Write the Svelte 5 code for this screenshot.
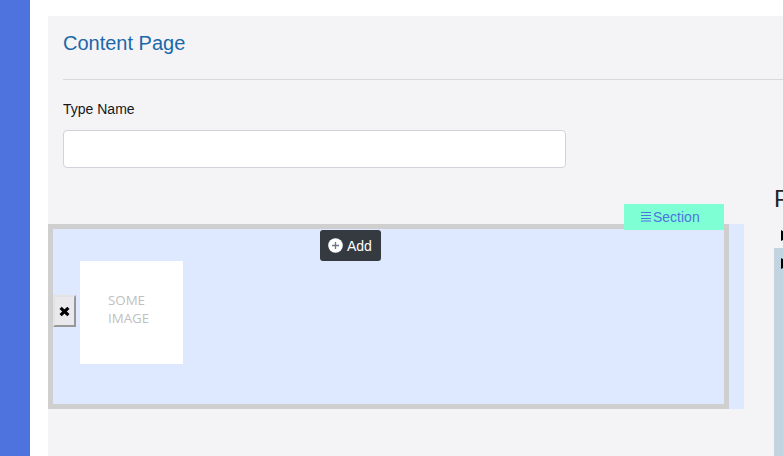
<script lang="ts">
  let typeName = $state('');

  const panels = [
    { id: 'elements', active: false },
    { id: 'settings', active: true },
  ];
</script>

<div class="layout">
  <aside class="sidebar"></aside>

  <main class="content">
    <header>
      <h1>Content Page</h1>
    </header>

    <div class="field">
      <label for="type-name">Type Name</label>
      <input id="type-name" type="text" bind:value={typeName} />
    </div>

    <div class="editor">
      <div class="row">
        <section class="block">
          <div class="tag">
            <svg width="12" height="12" viewBox="0 0 12 12" aria-hidden="true">
              <path d="M1 1.5h10M1 4.5h10M1 7.5h10M1 10h10" />
            </svg>
            <span>Section</span>
          </div>

          <button class="add">
            <svg width="15" height="15" viewBox="0 0 15 15" aria-hidden="true">
              <circle cx="7.5" cy="7.5" r="7.3" fill="#fff" />
              <path d="M7.5 4v7M4 7.5h7" stroke="#6c7580" stroke-width="1.3" />
            </svg>
            <span>Add</span>
          </button>

          <div class="item">
            <button class="remove" aria-label="Remove">
              <svg width="11" height="11" viewBox="0 0 11 11" aria-hidden="true">
                <path d="M1.6 1.9l7.8 7.2M9.4 1.9l-7.8 7.2" />
              </svg>
            </button>
            <div class="thumb">SOME<br />IMAGE</div>
          </div>
        </section>
      </div>

      <aside class="properties">
        <h2>P</h2>
        {#each panels as panel (panel.id)}
          <div class="panel" class:active={panel.active}>
            <svg width="9" height="12" viewBox="0 0 9 12" aria-hidden="true">
              <path d="M0 0L9 6L0 11z" />
            </svg>
          </div>
        {/each}
      </aside>
    </div>
  </main>
</div>

<style>
  :global(body) {
    margin: 0;
    overflow: hidden;
    background: #fff;
    color: #212529;
    font: 14px/22px 'Liberation Sans', Arial, sans-serif;
  }
  .layout,
  .layout * {
    box-sizing: border-box;
  }
  .layout {
    display: flex;
    height: 456px;
    overflow: hidden;
  }
  .sidebar {
    flex: 0 0 30px;
    background: #4e73df;
  }
  .content {
    flex: 1;
    min-width: 0;
    margin: 16px 0 0 18px;
    background: #f4f4f7;
  }
  header {
    height: 64px;
    margin-left: 15px;
    padding-top: 14px;
    border-bottom: 1px solid #d9d9dc;
  }
  h1 {
    margin: 0;
    color: #1b68a8;
    font-size: 20px;
    font-weight: 400;
    line-height: 26px;
  }
  .field {
    width: 503px;
    height: 88px;
    margin-left: 15px;
    padding-top: 18px;
  }
  label {
    display: block;
    height: 32px;
    color: #16181b;
  }
  input {
    display: block;
    width: 100%;
    height: 38px;
    padding: 6px 12px;
    border: 1px solid #d1d3db;
    border-radius: 4px;
    background: #fff;
    font: inherit;
  }
  .editor {
    display: flex;
    gap: 30px;
    height: 288px;
  }
  .row {
    flex: 0 0 696px;
    height: 185px;
    margin-top: 56px;
    padding-right: 15px;
    background: #dee8ff;
  }
  .block {
    position: relative;
    display: flex;
    flex-direction: column;
    height: 100%;
    border: 5px solid #cfcfcf;
  }
  .tag {
    position: absolute;
    top: -25px;
    right: 0;
    display: flex;
    align-items: center;
    gap: 1px;
    width: 100px;
    height: 26px;
    padding-left: 16px;
    background: #7fffd4;
    color: #4e73df;
  }
  .tag path {
    fill: none;
    stroke: #4e73df;
    stroke-width: 1.1;
  }
  .add {
    display: flex;
    align-items: center;
    align-self: center;
    gap: 4px;
    width: 61px;
    height: 31px;
    margin: 1px 76px 0 0;
    padding: 0 0 0 8px;
    border: 0;
    border-radius: 3px;
    background: #343a40;
    color: #fff;
    font: inherit;
  }
  .item {
    display: flex;
    align-items: center;
    gap: 4px;
  }
  .remove {
    display: flex;
    align-items: center;
    justify-content: center;
    width: 23px;
    height: 32px;
    margin-top: -3px;
    padding: 0;
    border: 2px solid;
    border-color: #e3e3e3 #979797 #979797 #e3e3e3;
    background: #e9e9ed;
  }
  .remove path {
    fill: none;
    stroke: #000;
    stroke-width: 3.2;
  }
  .thumb {
    width: 103px;
    height: 103px;
    padding: 30px 0 0 28px;
    background: #fff;
    color: #bfbfbf;
    font: 13.3px/18px 'Open Sans', sans-serif;
  }
  .properties {
    flex: 0 0 240px;
    display: flex;
    flex-direction: column;
  }
  h2 {
    height: 36px;
    margin: 16px 0 0;
    font-size: 24px;
    font-weight: 400;
    line-height: 29px;
  }
  .panel {
    height: 28px;
    padding: 10px 0 0 7px;
  }
  .panel svg {
    display: block;
  }
  .panel.active {
    flex: 1;
    background: #c1d4df;
  }
</style>
